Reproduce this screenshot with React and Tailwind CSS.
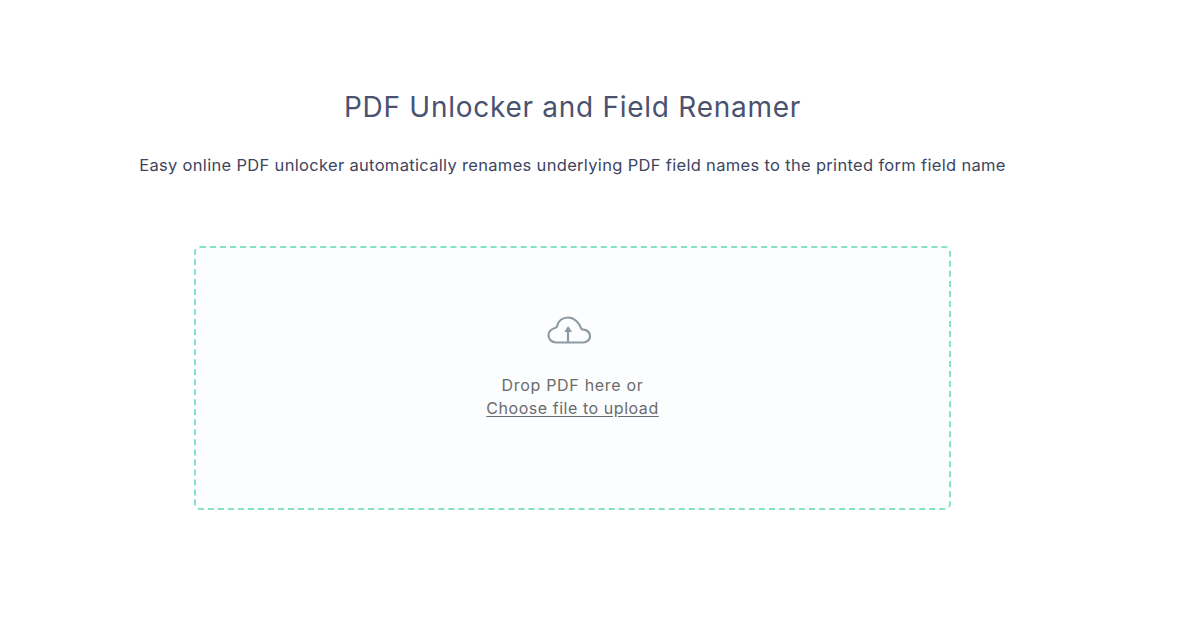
function CloudUpload() {
  return (
    <svg width="44" height="28" viewBox="0 0 44 28" fill="none" stroke="#8f9ba3" strokeWidth="2.200" strokeLinecap="round" strokeLinejoin="round">
      <path d="M9 26.500h27c3.900 0 7-2.800 7-6.300 0-3.600-2.900-6.400-6.500-6.500-1.200 0-2-.4-2.500-1.500C32 6.500 27 1.500 21 1.500c-5.500 0-9.700 3.600-11 8.700-.2.900-.7 1.300-1.500 1.600C4.500 13 1.500 15.500 1.500 19.300c0 4 3.300 7.200 7.500 7.200z" />
      <path d="M21 26V13" />
      <path d="M21 11l-3 4.500h6z" fill="#8f9ba3" strokeWidth="1" />
    </svg>
  )
}

export default function App() {
  return (
    <div className="h-[619px] w-[1200px] overflow-hidden bg-white font-['Inter',sans-serif]">
      <div className="flex w-[1145px] flex-col items-center">
        <h1 className="mt-[87px] text-[28px] leading-[40px] tracking-[0.73px] text-[#4a5270]">PDF Unlocker and Field Renamer</h1>
        <p className="mt-[26px] text-[16.500px] leading-[24px] tracking-[0.32px] text-[#3d4560]">
          Easy online PDF unlocker automatically renames underlying PDF field names to the printed form field name
        </p>
        <div className="mt-[69px] flex h-[264px] w-[757px] flex-col items-center rounded-[6px] border-2 border-dashed border-[#86e2c4] bg-[#fbfdfe]">
          <div className="mt-[68px] mr-[7px]">
            <CloudUpload />
          </div>
          <p className="mt-[30px] text-[16px] leading-[23px] tracking-[0.68px] text-[#6b6b6b]">Drop PDF here or</p>
          <a className="text-[16px] leading-[23px] tracking-[0.55px] text-[#6b6b6b] underline underline-offset-[2px]">Choose file to upload</a>
        </div>
      </div>
    </div>
  )
}
